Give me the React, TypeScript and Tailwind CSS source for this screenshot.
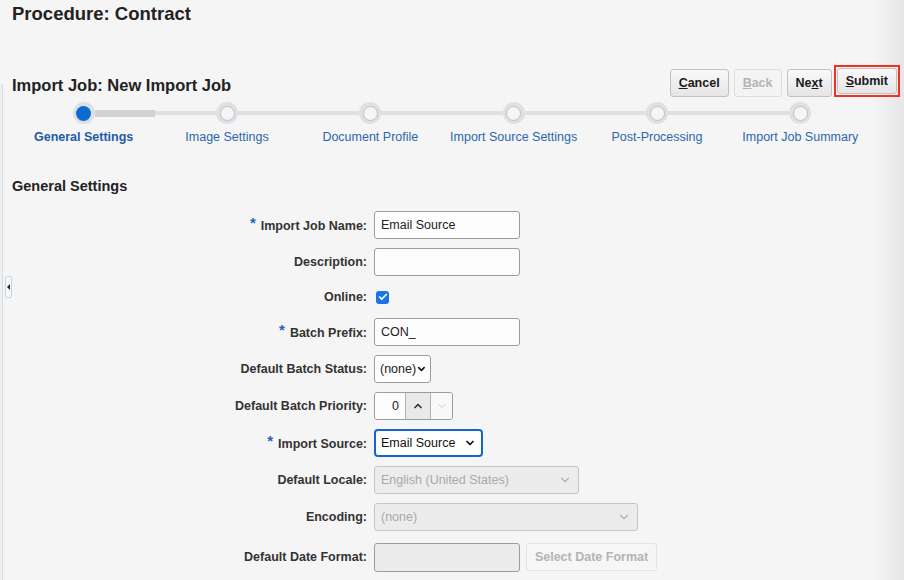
import { ChevronDown, ChevronUp, Check } from 'lucide-react'

const STEPS = [
  'General Settings',
  'Image Settings',
  'Document Profile',
  'Import Source Settings',
  'Post-Processing',
  'Import Job Summary',
]

function Step({ label, index }: { label: string; index: number }) {
  const first = index === 0
  const last = index === STEPS.length - 1
  return (
    <div className="flex flex-col items-center">
      <div className="flex items-center w-full h-[22px]">
        <div className={first ? 'flex-1' : 'flex-1 h-[4px] bg-[#e0e0e0]'} />
        <div className="w-[22px] h-[22px] shrink-0 rounded-full bg-[#e0e0e0] flex items-center justify-center">
          <div
            className={
              first
                ? 'w-[15px] h-[15px] rounded-full bg-[#0a6bd0]'
                : 'w-[15px] h-[15px] rounded-full border border-[#b8c0ca] bg-[#f3f5f8]'
            }
          />
        </div>
        <div
          className={
            last ? 'flex-1' : first ? 'flex-1 h-[7px] bg-[#d2d2d2]' : 'flex-1 h-[4px] bg-[#e0e0e0]'
          }
        />
      </div>
      <div
        className={
          first
            ? 'mt-[5px] text-[12.5px] leading-[16px] font-bold text-[#1c5ba6]'
            : 'mt-[5px] text-[12.5px] leading-[16px] text-[#2b67ad]'
        }
      >
        {label}
      </div>
    </div>
  )
}

function Field({
  label,
  required,
  children,
  tall = true,
}: {
  label: string
  required?: boolean
  children: React.ReactNode
  tall?: boolean
}) {
  return (
    <div className={tall ? 'flex items-center h-[28px]' : 'flex items-center h-[24px]'}>
      <label className="w-[355px] mr-[7px] text-right text-[12.5px] font-bold text-[#333]">
        {required && (
          <span className="text-[#1f63b8] text-[15px] relative top-[-2px] mr-[5px]">*</span>
        )}
        {label}
      </label>
      {children}
    </div>
  )
}

const inputCls =
  'h-[28px] w-[146px] px-[6px] bg-[#fdfdfd] border border-[#9c9c9c] rounded-[3px] text-[12.5px] text-[#222] outline-none'

const btnCls =
  'h-[28px] px-[8px] rounded-[3px] border border-[#c2c2c2] bg-linear-to-b from-[#f9f9f9] to-[#e5e5e5] text-[12.5px] font-bold text-[#1a1a1a]'

export default function App() {
  return (
    <div className="relative w-[904px] h-[580px] overflow-hidden bg-[linear-gradient(to_right,#f5f5f5_872px,#e6e6e6_904px)] font-['Liberation_Sans',Arial,sans-serif] text-[#222]">
      {/* left collapse strip */}
      <div className="absolute left-0 top-[84px] bottom-0 w-[3px] bg-[#eef1f4] border-r border-[#d6dce3]" />
      <div className="absolute left-[5px] top-[276px] w-[7px] h-[22px] rounded-[2px] border border-[#cdd3da] bg-[#f7f8fa] flex items-center justify-center">
        <div className="w-0 h-0 border-y-[3px] border-y-transparent border-r-[3px] border-r-[#222]" />
      </div>

      <div className="pl-3 pt-[4px]">
        <h1 className="text-[18.5px] leading-[20px] font-bold text-[#222]">Procedure: Contract</h1>
      </div>

      <div className="mt-[41px] flex items-end justify-between pl-3 pr-[4px]">
        <h2 className="text-[16.5px] leading-[20px] font-bold text-[#222] mb-[2px]">
          Import Job: New Import Job
        </h2>
        <div className="flex items-end">
          <button className={btnCls}>
            <u>C</u>ancel
          </button>
          <button className="ml-[5px] h-[28px] px-[8px] rounded-[3px] border border-[#dddddd] bg-[#f4f4f4] text-[12.5px] font-bold text-[#b3b3b3]">
            <u>B</u>ack
          </button>
          <button className={`ml-[5px] ${btnCls}`}>
            Ne<u>x</u>t
          </button>
          <div className="ml-[2px] h-[32px] border-2 border-[#ee3322] p-[1px]">
            <button className="h-full px-[8px] rounded-[3px] border border-[#c2c2c2] bg-linear-to-b from-[#f9f9f9] to-[#e5e5e5] text-[12.5px] font-bold text-[#1a1a1a]">
              <u>S</u>ubmit
            </button>
          </div>
        </div>
      </div>

      <div className="ml-3 mt-[5px] w-[860px] grid grid-cols-6">
        {STEPS.map((s, i) => (
          <Step key={s} label={s} index={i} />
        ))}
      </div>

      <div className="pl-3 mt-[32px]">
        <h3 className="text-[14.5px] leading-[18px] font-bold text-[#222]">General Settings</h3>

        <div className="mt-[16px] flex flex-col gap-[9px]">
          <Field label="Import Job Name:" required>
            <input className={inputCls} defaultValue="Email Source" />
          </Field>
          <Field label="Description:">
            <input className={inputCls} defaultValue="" />
          </Field>
          <Field label="Online:" tall={false}>
            <div className="ml-[2px] w-[13px] h-[13px] rounded-[3px] bg-[#1a73e8] flex items-center justify-center">
              <Check size={10} strokeWidth={4} className="text-white" />
            </div>
          </Field>
          <Field label="Batch Prefix:" required>
            <input className={inputCls} defaultValue="CON_" />
          </Field>
          <Field label="Default Batch Status:">
            <div className="h-[28px] w-[57px] pl-[5px] pr-[3px] flex items-center justify-between bg-[#fdfdfd] border border-[#9c9c9c] rounded-[3px] text-[12.5px] text-[#222]">
              <span>(none)</span>
              <ChevronDown size={12} strokeWidth={3.5} className="text-[#111]" />
            </div>
          </Field>
          <Field label="Default Batch Priority:">
            <div className="h-[28px] w-[79px] flex border border-[#9c9c9c] rounded-[3px] overflow-hidden">
              <div className="w-[30px] bg-[#fdfdfd] flex items-center justify-end pr-[6px] text-[12.5px] text-[#222]">
                0
              </div>
              <div className="w-[25px] bg-[#e9e9e9] border-l border-[#b3b3b3] flex items-center justify-center">
                <ChevronUp size={12} strokeWidth={3.5} className="text-[#333]" />
              </div>
              <div className="flex-1 bg-[#f9f9f9] border-l border-[#b3b3b3] flex items-center justify-center">
                <ChevronDown size={12} strokeWidth={2} className="text-[#c8c8c8]" />
              </div>
            </div>
          </Field>
          <Field label="Import Source:" required>
            <div className="h-[28px] w-[109px] pl-[5px] pr-[5px] flex items-center justify-between bg-white border-2 border-[#1565d0] rounded-[4px] text-[12.5px] text-[#111]">
              <span>Email Source</span>
              <ChevronDown size={12} strokeWidth={3.5} className="text-[#111]" />
            </div>
          </Field>
          <Field label="Default Locale:">
            <div className="h-[28px] w-[205px] pl-[6px] pr-[6px] flex items-center justify-between bg-[#ececec] border border-[#c6c6c6] rounded-[3px] text-[12.5px] text-[#a9a9a9]">
              <span>English (United States)</span>
              <ChevronDown size={14} strokeWidth={2} className="text-[#b0b0b0]" />
            </div>
          </Field>
          <Field label="Encoding:">
            <div className="h-[28px] w-[264px] pl-[6px] pr-[6px] flex items-center justify-between bg-[#ececec] border border-[#c6c6c6] rounded-[3px] text-[12.5px] text-[#a9a9a9]">
              <span>(none)</span>
              <ChevronDown size={14} strokeWidth={2} className="text-[#b0b0b0]" />
            </div>
          </Field>
          <div className="mt-[3px]">
            <Field label="Default Date Format:">
              <div className="h-[29px] w-[146px] bg-[#ececec] border border-[#9c9c9c] rounded-[3px]" />
              <button className="ml-[6px] h-[28px] w-[131px] rounded-[3px] border border-[#e2e2e2] bg-[#f6f6f6] text-[12.5px] font-bold text-[#b4b4b4]">
                Select Date Format
              </button>
            </Field>
          </div>
        </div>
      </div>
    </div>
  )
}
